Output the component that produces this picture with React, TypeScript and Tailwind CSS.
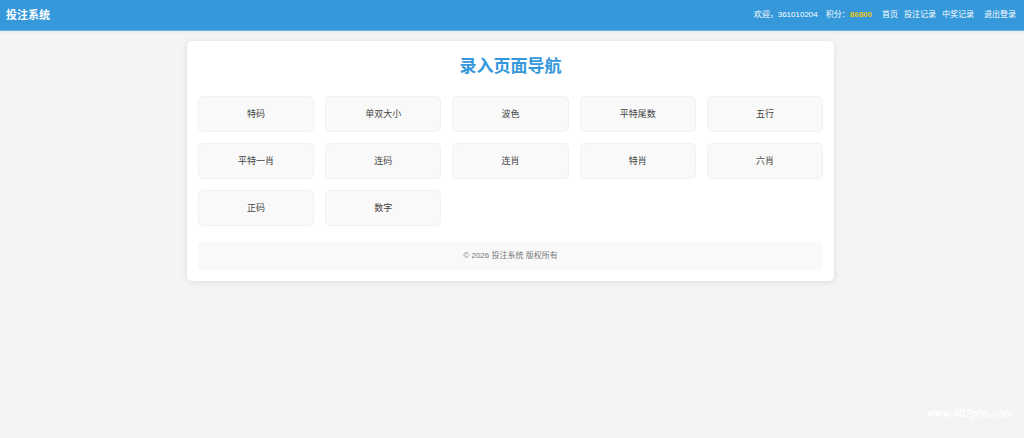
const links = [
  { label: "首页", className: "ml-2.5" },
  { label: "投注记录", className: "ml-1.5" },
  { label: "中奖记录", className: "ml-1.5" },
  { label: "退出登录", className: "ml-2.5" },
];

const pages = [
  "特码",
  "单双大小",
  "波色",
  "平特尾数",
  "五行",
  "平特一肖",
  "连码",
  "连肖",
  "特肖",
  "六肖",
  "正码",
  "数字",
];

function Header() {
  return (
    <header className="flex items-center justify-between border-b border-[#6cb1e2] bg-[#3498db] py-1.5 pr-2 pl-1.5 text-white shadow-[0_1px_3px_rgba(0,0,0,0.06)]">
      <p className="text-[11px] leading-[18px] font-bold">投注系统</p>
      <nav className="flex items-center text-[8px] leading-4">
        <span>欢迎，361010204</span>
        <span className="ml-2">
          积分：<b className="text-[#f1c40f]">86800</b>
        </span>
        {links.map((link) => (
          <a key={link.label} href="#" className={link.className}>
            {link.label}
          </a>
        ))}
      </nav>
    </header>
  );
}

function PageTile({ label }: { label: string }) {
  return (
    <a
      href="#"
      className="flex h-9 items-center justify-center rounded-[5px] border border-[#f2f2f2] bg-[#f9f9f9] text-[9px] leading-3 text-[#444]"
    >
      {label}
    </a>
  );
}

function App() {
  return (
    <div className="relative min-h-screen bg-[#f4f4f4] font-['Liberation_Sans','Noto_Sans_CJK_SC',sans-serif]">
      <Header />
      <main className="pt-2.5 pr-[3px]">
        <div className="mx-auto max-w-[647px] rounded-[5px] bg-white p-[11px] shadow-[0_1px_6px_rgba(0,0,0,0.1)]">
          <h1 className="pt-1 pb-[18px] text-center text-[17px] leading-[22px] font-bold text-[#3498db]">
            录入页面导航
          </h1>
          <div className="grid grid-cols-5 gap-[11px]">
            {pages.map((page) => (
              <PageTile key={page} label={page} />
            ))}
          </div>
          <footer className="mt-4 rounded-[5px] bg-[#f9f9f9] py-2 text-center text-[8px] leading-3 text-[#777]">
            © 2026 投注系统 版权所有
          </footer>
        </div>
      </main>
      <p className="absolute right-[11px] bottom-4 font-[Roboto,sans-serif] text-[11px] leading-4 font-medium text-white italic">
        www.007php.com
      </p>
    </div>
  );
}

export default App;
